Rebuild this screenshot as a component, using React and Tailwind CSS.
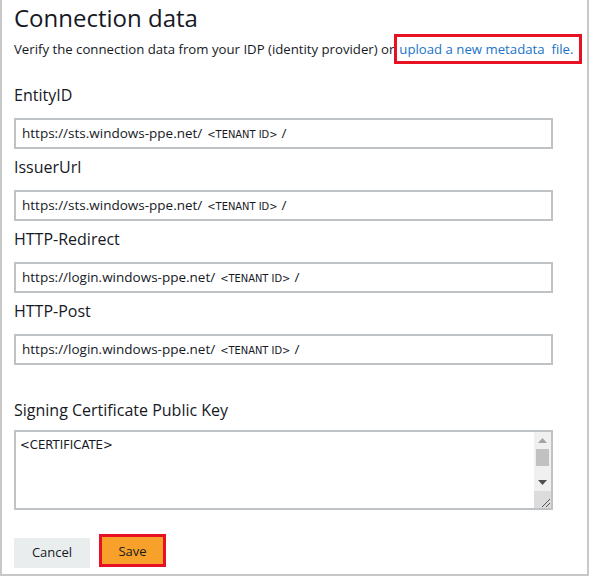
import React from 'react';

const fields = [
  { label: 'EntityID', host: 'https://sts.windows-ppe.net/' },
  { label: 'IssuerUrl', host: 'https://sts.windows-ppe.net/' },
  { label: 'HTTP-Redirect', host: 'https://login.windows-ppe.net/' },
  { label: 'HTTP-Post', host: 'https://login.windows-ppe.net/' },
];

function Field({ label, host, first }) {
  return (
    <div className={first ? 'mt-[20px]' : 'mt-[7px]'}>
      <div className="text-[16px] leading-[22px] text-[#16191f]">{label}</div>
      <div className="mt-[12px] h-[31px] w-[539px] border-2 border-[#bfc3c6] bg-white flex items-center pl-[6px] text-[13.5px] text-[#16191f]">
        <span className="leading-[20px] pt-[1px]">
          {host}
          <span className="ml-[5px] text-[11px] font-['DejaVu_Sans_Condensed',sans-serif]">&lt;TENANT ID&gt;</span>
          <span className="ml-[4px]">/</span>
        </span>
      </div>
    </div>
  );
}

function Scrollbar() {
  return (
    <div className="w-[17px] flex flex-col bg-[#f0f0f0]">
      <div className="h-[17px] flex items-center justify-center">
        <svg width="9" height="5" viewBox="0 0 9 5"><path d="M4.5 0L9 5H0z" fill="#a3a3a3" /></svg>
      </div>
      <div className="mx-[2px] h-[17px] bg-[#c1c1c1]" />
      <div className="flex-1" />
      <div className="h-[17px] flex items-center justify-center">
        <svg width="9" height="5" viewBox="0 0 9 5"><path d="M0 0H9L4.5 5z" fill="#505050" /></svg>
      </div>
      <div className="h-[17px] bg-[#dcdcdc] flex items-end justify-end">
        <svg width="12" height="12" viewBox="0 0 12 12">
          <path d="M11 3L3 11M11 7L7 11" stroke="#555" strokeWidth="1" />
        </svg>
      </div>
    </div>
  );
}

export default function App() {
  return (
    <div className="w-[590px] h-[577px] bg-white font-['Open_Sans',sans-serif] text-[#16191f]">
      <div className="w-[589px] h-[576px] overflow-hidden border-l-2 border-r-2 border-b-2 border-[#c8c8c8] pl-[12px] pt-[2px]">
        <h1 className="text-[24px] leading-[32px] font-normal text-[#16191f]">Connection data</h1>
        <div className="h-[30px] flex items-center text-[13.2px] leading-[18px] whitespace-nowrap">
          <span>Verify the connection data from your IDP (identity provider) or</span>
          <span className="h-[30px] flex items-center border-[3px] border-[#e81123] pl-[2px] pr-[6px] text-[#1a73c8]">
            upload a new metadata&nbsp; file.
          </span>
        </div>

        {fields.map((f, i) => (
          <Field key={f.label} label={f.label} host={f.host} first={i === 0} />
        ))}

        <div className="mt-[34px] text-[16px] leading-[22px]">Signing Certificate Public Key</div>
        <div className="mt-[9px] h-[80px] w-[539px] border-2 border-[#bfc3c6] flex overflow-hidden">
          <div className="flex-1 pl-[4px] pt-[4px] text-[13px] leading-[18px] font-['DejaVu_Sans_Condensed',sans-serif] overflow-hidden whitespace-nowrap">
            <div>&lt;CERTIFICATE&gt;</div>
            <div className="mt-[51px] text-[#5a6570]">
              MIIC8DCCAdigAwIBAgIQ FXK7Mn   xq9ldWPB  uAcZcKzmzI3gwDQYJKoZIhvcNAQELBQAwNDEyMDAGA1UEAxMp
            </div>
          </div>
          <Scrollbar />
        </div>

        <div className="mt-[24px] flex items-start gap-[9px]">
          <button className="mt-[4px] h-[30px] w-[76px] bg-[#eaeded] text-[13px] text-[#16191f]">Cancel</button>
          <button className="h-[33px] w-[67px] pt-[3px] bg-[#f7a12a] border-[3px] border-[#e81123] text-[13px] text-[#16191f]">Save</button>
        </div>
      </div>
    </div>
  );
}
